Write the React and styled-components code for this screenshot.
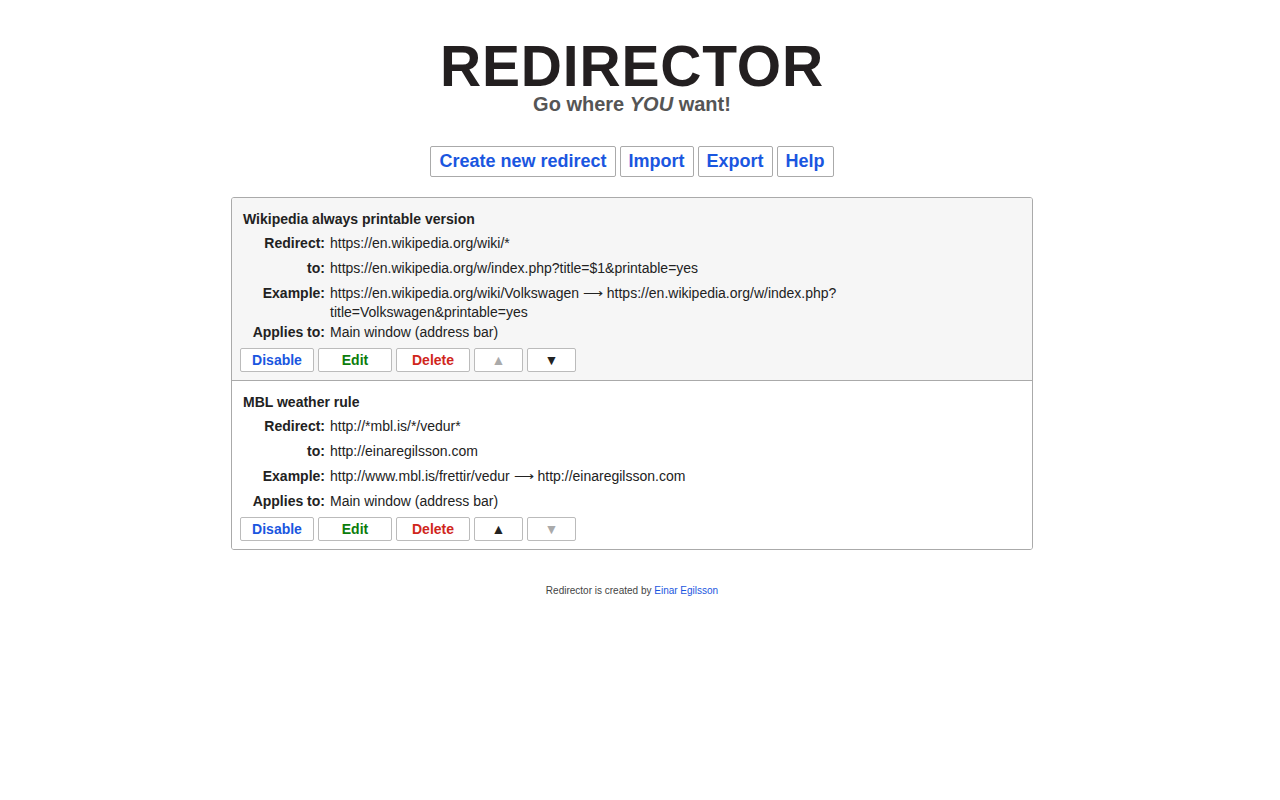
import React from 'react';
import styled, { createGlobalStyle } from 'styled-components';

const GlobalStyle = createGlobalStyle`
	body {
		margin: 0;
		background: #fff;
		font-family: "Liberation Sans", Arial, Helvetica, sans-serif;
		color: #222;
	}
`;

const rules = [
	{
		id: 1,
		title: 'Wikipedia always printable version',
		from: 'https://en.wikipedia.org/wiki/*',
		to: 'https://en.wikipedia.org/w/index.php?title=$1&printable=yes',
		example: (
			<>
				https://en.wikipedia.org/wiki/Volkswagen ⟶ https://en.wikipedia.org/w/index.php?<wbr />
				title=Volkswagen&amp;printable=yes
			</>
		),
		appliesTo: 'Main window (address bar)',
		canUp: false,
		canDown: true,
	},
	{
		id: 2,
		title: 'MBL weather rule',
		from: 'http://*mbl.is/*/vedur*',
		to: 'http://einaregilsson.com',
		example: 'http://www.mbl.is/frettir/vedur ⟶ http://einaregilsson.com',
		appliesTo: 'Main window (address bar)',
		canUp: true,
		canDown: false,
	},
];

const App = () => {
	return (
		<Page>
			<GlobalStyle />
			<Header>
				<Logo>REDIRECTOR</Logo>
				<Tagline>
					Go where <em>YOU</em> want!
				</Tagline>
			</Header>
			<Menu>
				<MenuButton>Create new redirect</MenuButton>
				<MenuButton>Import</MenuButton>
				<MenuButton>Export</MenuButton>
				<MenuButton>Help</MenuButton>
			</Menu>
			<RuleList>
				{rules.map((r, i) => (
					<Rule key={r.id} $shaded={i % 2 === 0}>
						<RuleTitle>{r.title}</RuleTitle>
						<Details>
							<Label>Redirect:</Label>
							<Value>{r.from}</Value>
							<Label>to:</Label>
							<Value>{r.to}</Value>
							<Label>Example:</Label>
							<Value>{r.example}</Value>
							<Label>Applies to:</Label>
							<Value>{r.appliesTo}</Value>
						</Details>
						<Actions>
							<ActionButton $color="#1a56e0">Disable</ActionButton>
							<ActionButton $color="#0b7d0b">Edit</ActionButton>
							<ActionButton $color="#d0261c">Delete</ActionButton>
							<ArrowButton $disabled={!r.canUp}>▲</ArrowButton>
							<ArrowButton $disabled={!r.canDown}>▼</ArrowButton>
						</Actions>
					</Rule>
				))}
			</RuleList>
			<Footer>
				Redirector is created by <FooterLink href="#">Einar Egilsson</FooterLink>
			</Footer>
		</Page>
	);
};

// the original page is centred next to a scrollbar, hence the right padding
const Page = styled.div`
	display: flex;
	flex-direction: column;
	align-items: center;
	padding: 41px 16px 0 0;
`;
const Header = styled.header`
	display: flex;
	flex-direction: column;
	align-items: center;
`;
const Logo = styled.h1`
	margin: 0;
	font-size: 57px;
	line-height: 50px;
	font-weight: bold;
	letter-spacing: 0.8px;
	color: #231f20;
`;
const Tagline = styled.div`
	font-size: 20px;
	line-height: 26px;
	font-weight: bold;
	color: #555;
	em {
		font-style: italic;
	}
`;
const Menu = styled.nav`
	display: flex;
	gap: 4px;
	margin-top: 29px;
`;
const MenuButton = styled.a`
	display: block;
	padding: 4px 8px;
	font-size: 18px;
	line-height: 21px;
	font-weight: bold;
	color: #1a56e0;
	background: #fff;
	border: 1px solid #aaa;
	border-radius: 2px;
	cursor: pointer;
`;
const RuleList = styled.div`
	width: 800px;
	margin-top: 20px;
	border: 1px solid #aaa;
	border-radius: 3px;
	overflow: hidden;
`;
const Rule = styled.div`
	padding: 12px 8px 8px 8px;
	background: ${(p) => (p.$shaded ? '#f6f6f6' : '#fff')};
	& + & {
		border-top: 1px solid #aaa;
	}
`;
const RuleTitle = styled.div`
	margin-left: 3px;
	font-size: 14px;
	line-height: 18px;
	font-weight: bold;
`;
const Details = styled.div`
	display: grid;
	grid-template-columns: 85px 510px;
	column-gap: 5px;
	margin-top: 6px;
	font-size: 14px;
	line-height: 19px;
`;
const Label = styled.div`
	box-sizing: border-box;
	min-height: 25px;
	text-align: right;
	font-weight: bold;
`;
const Value = styled.div`
	box-sizing: border-box;
	min-height: 25px;
	padding-bottom: 1px;
`;
const Actions = styled.div`
	display: flex;
	gap: 4px;
`;
const ActionButton = styled.button`
	width: 74px;
	height: 24px;
	padding: 0;
	font-family: inherit;
	font-size: 14px;
	font-weight: bold;
	color: ${(p) => p.$color};
	background: #fff;
	border: 1px solid #bbb;
	border-radius: 2px;
	cursor: pointer;
`;
const ArrowButton = styled(ActionButton)`
	width: 49px;
	color: ${(p) => (p.$disabled ? '#aaa' : '#222')};
`;
const Footer = styled.footer`
	margin-top: 34px;
	font-size: 10px;
	line-height: 13px;
	color: #444;
`;
const FooterLink = styled.a`
	color: #1a56e0;
	text-decoration: none;
`;

export default App;
